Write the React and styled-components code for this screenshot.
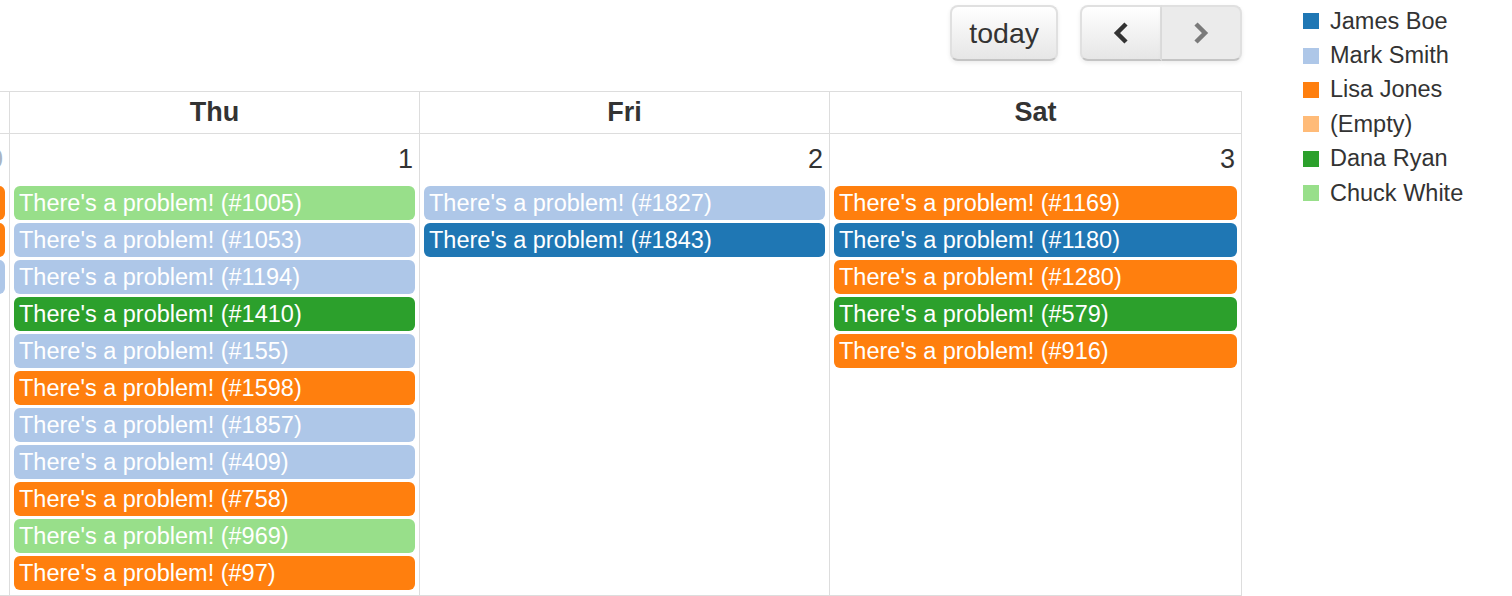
import React from "react";
import styled, { createGlobalStyle } from "styled-components";

const GlobalStyle = createGlobalStyle`
    body {
        margin: 0;
        overflow: hidden;
        background: #fff;
        font-family: "Liberation Sans", Arial, sans-serif;
        color: #333;
    }
`

const Page = styled.div`
    display: flex;
    align-items: flex-start;
    width: 1512px;
    height: 596px;
    overflow: hidden;
`

const CalendarArea = styled.div`
    flex-shrink: 0;
    width: 1642px;
    margin-left: -400px;
`

const Toolbar = styled.div`
    display: flex;
    justify-content: flex-end;
    gap: 22px;
    padding-top: 5px;
    margin-bottom: 30px;
`

const Button = styled.button`
    display: flex;
    align-items: center;
    justify-content: center;
    height: 56px;
    padding: 0 17px;
    font-family: "Liberation Sans", Arial, sans-serif;
    font-size: 28.5px;
    color: #333;
    background-color: #f5f5f5;
    background-image: linear-gradient(to bottom, #ffffff, #e6e6e6);
    border: 2px solid #e0e0e0;
    border-bottom-color: #c4c4c4;
    border-radius: 8px;
    box-shadow: 0 2px 4px rgba(0, 0, 0, 0.08);
    cursor: pointer;
`

const ButtonGroup = styled.div`
    display: flex;
`

const NavButton = styled(Button)`
    width: ${(p) => p.$width}px;
    padding: 0;
    border-radius: ${(p) => (p.$side === "left" ? "8px 0 0 8px" : "0 8px 8px 0")};
    ${(p) => p.$side === "right" && "border-left: none;"}
    ${(p) => p.$muted && "background-image: none; background-color: #ebebeb;"}
`

const Grid = styled.div`
    display: grid;
    grid-template-columns: 410px 410px 410px 412px;
    border-top: 1px solid #ddd;
`

const HeadCell = styled.div`
    height: 41px;
    line-height: 41px;
    text-align: center;
    font-size: 27px;
    font-weight: bold;
    color: #333;
    border-right: 1px solid #ddd;
    border-bottom: 1px solid #ddd;
`

const DayCell = styled.div`
    display: flex;
    flex-direction: column;
    padding: 0 4px 2px 4px;
    border-right: 1px solid #ddd;
    border-bottom: 1px solid #ddd;
`

const DayNumber = styled.div`
    text-align: right;
    padding: 10px 2px 0 0;
    margin-bottom: 12px;
    font-size: 27px;
    line-height: 30px;
    color: ${(p) => (p.$other ? "#a9b4c4" : "#333")};
`

const Event = styled.div`
    height: 34px;
    line-height: 35px;
    margin-bottom: 3px;
    padding-left: 5px;
    border-radius: 6px;
    font-size: 23.5px;
    color: #fff;
    white-space: nowrap;
    overflow: hidden;
    background: ${(p) => p.$color};
`

const Legend = styled.ul`
    list-style: none;
    margin: 4px 0 0 61px;
    padding: 0;
`

const LegendRow = styled.li`
    display: flex;
    align-items: center;
    height: 34.4px;
    font-size: 23.5px;
    color: #333;
`

const Swatch = styled.span`
    width: 16px;
    height: 16px;
    margin-right: 11px;
    background: ${(p) => p.$color};
`

const people = {
    james: { name: "James Boe", color: "#1f77b4" },
    mark: { name: "Mark Smith", color: "#aec7e8" },
    lisa: { name: "Lisa Jones", color: "#ff7f0e" },
    empty: { name: "(Empty)", color: "#ffbb78" },
    dana: { name: "Dana Ryan", color: "#2ca02c" },
    chuck: { name: "Chuck White", color: "#98df8a" },
};

const days = [
    { label: "Wed", day: "30", other: true, events: [["lisa", 1021], ["lisa", 1390], ["mark", 512]] },
    {
        label: "Thu",
        day: "1",
        events: [
            ["chuck", 1005], ["mark", 1053], ["mark", 1194], ["dana", 1410],
            ["mark", 155], ["lisa", 1598], ["mark", 1857], ["mark", 409],
            ["lisa", 758], ["chuck", 969], ["lisa", 97],
        ],
    },
    { label: "Fri", day: "2", events: [["mark", 1827], ["james", 1843]] },
    {
        label: "Sat",
        day: "3",
        events: [["lisa", 1169], ["james", 1180], ["lisa", 1280], ["dana", 579], ["lisa", 916]],
    },
];

const Chevron = ({ dir, color }) => (
    <svg width="22" height="24" viewBox="0 0 22 24">
        <polyline
            points={dir === "left" ? "16,3 7,12 16,21" : "6,3 15,12 6,21"}
            fill="none"
            stroke={color}
            strokeWidth="4.5"
        />
    </svg>
);

const App = () => {
    return (
        <Page>
            <GlobalStyle />
            <CalendarArea>
                <Toolbar>
                    <Button>today</Button>
                    <ButtonGroup>
                        <NavButton $side="left" $width={82}>
                            <Chevron dir="left" color="#333" />
                        </NavButton>
                        <NavButton $side="right" $width={80} $muted>
                            <Chevron dir="right" color="#7a7a7a" />
                        </NavButton>
                    </ButtonGroup>
                </Toolbar>
                <Grid>
                    {days.map((d) => (
                        <HeadCell key={d.label}>{d.label}</HeadCell>
                    ))}
                    {days.map((d) => (
                        <DayCell key={d.label + "-cell"}>
                            <DayNumber $other={d.other}>{d.day}</DayNumber>
                            {d.events.map(([who, id]) => (
                                <Event key={id} $color={people[who].color}>
                                    There's a problem! (#{id})
                                </Event>
                            ))}
                        </DayCell>
                    ))}
                </Grid>
            </CalendarArea>
            <Legend>
                {Object.values(people).map((p) => (
                    <LegendRow key={p.name}>
                        <Swatch $color={p.color} />
                        {p.name}
                    </LegendRow>
                ))}
            </Legend>
        </Page>
    );
};

export default App;
